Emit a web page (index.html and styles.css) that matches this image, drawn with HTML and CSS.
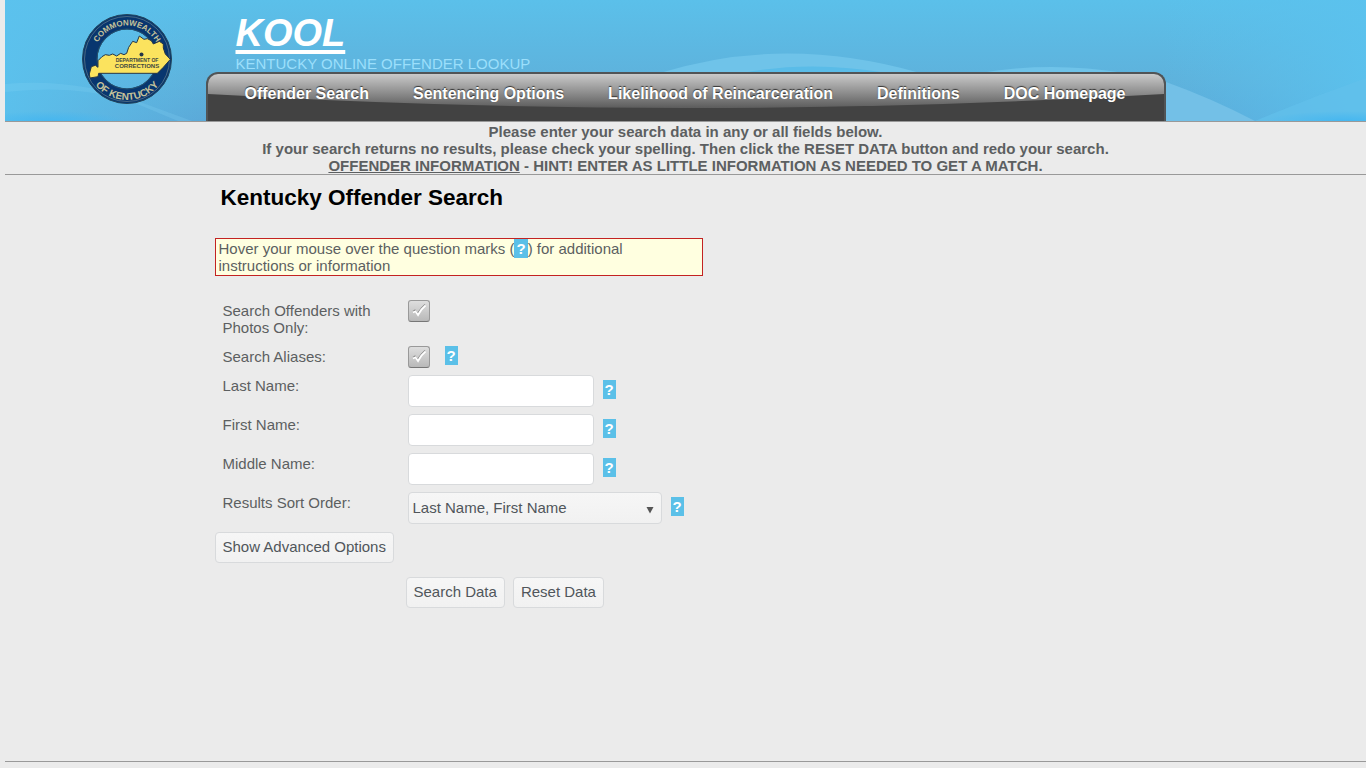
FILE: index.html
```html
<!DOCTYPE html>
<html lang="en">
<head>
<meta charset="utf-8">
<title>KOOL - Kentucky Online Offender Lookup</title>
<link rel="stylesheet" href="styles.css">
</head>
<body>
<header class="banner">
  <svg class="banner-art" viewBox="0 0 1361 121" preserveAspectRatio="none" aria-hidden="true">
    <defs>
      <linearGradient id="sky" x1="0" y1="0" x2="0" y2="1"><stop offset="0" stop-color="#5bc0ea"/><stop offset="0.65" stop-color="#5eb2dc"/><stop offset="1" stop-color="#5ba9d8"/></linearGradient>
      <linearGradient id="edge" x1="0" y1="0" x2="1" y2="0"><stop offset="0" stop-color="#5bc2ee" stop-opacity="0.9"/><stop offset="0.15" stop-color="#5bc2ee" stop-opacity="0"/><stop offset="0.85" stop-color="#5bc2ee" stop-opacity="0"/><stop offset="1" stop-color="#5bc2ee" stop-opacity="0.9"/></linearGradient>
      <radialGradient id="glow"><stop offset="0" stop-color="#43b6f0" stop-opacity="0.9"/><stop offset="1" stop-color="#43b6f0" stop-opacity="0"/></radialGradient>
    </defs>
    <rect width="1361" height="121" fill="url(#sky)"/>
    <rect width="1361" height="121" fill="url(#edge)"/>
    <ellipse cx="45" cy="121" rx="75" ry="10" fill="url(#glow)"/>
    <path d="M0 84Q70 78 135 102L187 121H173L125 101Q70 84 0 92Z" fill="#8ad4f5" opacity="0.22"/>
    <path d="M655 73Q780 34 915 73Z" fill="#6fc3e9"/>
    <path d="M738 73Q805 60 882 73Z" fill="#5abce8"/>
    <path d="M975 73Q1045 61 1120 73Z" fill="#6fc3e9"/>
    <path d="M1161 82Q1206 98 1250 121H1161Z" fill="#73c0e7"/>
    <path d="M1250 121Q1305 98 1361 78V121Z" fill="#62c1eb" opacity="0.7"/>
    <ellipse cx="1340" cy="121" rx="80" ry="10" fill="url(#glow)"/>
  </svg>
  <svg class="seal" viewBox="0 0 92 92" role="img" aria-label="Commonwealth of Kentucky Department of Corrections">
    <defs>
      <path id="arc-top" d="M12.500 46A33.500 33.500 0 0 1 79.500 46"/>
      <path id="arc-bottom" d="M5 46A41 41 0 0 0 87 46"/>
    </defs>
    <circle cx="46" cy="46" r="37" fill="none" stroke="#08366f" stroke-width="15"/>
    <circle cx="46" cy="46" r="44.500" fill="none" stroke="#24465b"/>
    <circle cx="46" cy="46" r="42.500" fill="none" stroke="#67808a" stroke-width="0.700"/>
    <circle cx="46" cy="46" r="30" fill="none" stroke="#28536c"/>
    <path transform="translate(-11 -9) scale(.3333)" d="M58 210L64 188L76 184L84 190V170L96 158L106 152L118 154L128 150L140 156L152 148L162 152L170 148L176 130L188 112L200 116L208 96L222 106L232 104L244 110L250 120L268 112L280 120V132L286 150L301 166L280 190L262 208H86L84 218L60 222Z" fill="#fbe35e" stroke="#253547" stroke-width="3"/>
    <circle cx="60.500" cy="41.500" r="2" fill="#253547"/>
    <text class="seal-ring" font-size="8"><textPath href="#arc-top" startOffset="50%" text-anchor="middle">COMMONWEALTH</textPath></text>
    <text class="seal-ring" font-size="10"><textPath href="#arc-bottom" startOffset="50%" text-anchor="middle">OF KENTUCKY</textPath></text>
    <text class="seal-name" x="56" y="49" font-size="5" text-anchor="middle">DEPARTMENT OF</text>
    <text class="seal-name" x="56" y="55" font-size="6" text-anchor="middle">CORRECTIONS</text>
  </svg>
  <div class="banner-inner">
    <h1 class="brand"><a href="#">KOOL</a></h1>
    <p class="tagline">KENTUCKY ONLINE OFFENDER LOOKUP</p>
    <nav class="menu">
      <svg class="menu-gloss" viewBox="0 0 956 47" preserveAspectRatio="none" aria-hidden="true">
        <defs><linearGradient id="gloss" x1="0" y1="0" x2="0" y2="1"><stop offset="0" stop-color="#cacaca"/><stop offset="1" stop-color="#5c5c5c"/></linearGradient></defs>
        <path d="M0 0H956V20Q478 48 0 20Z" fill="url(#gloss)"/>
      </svg>
      <a href="#">Offender Search</a>
      <a href="#">Sentencing Options</a>
      <a href="#">Likelihood of Reincarceration</a>
      <a href="#">Definitions</a>
      <a href="#">DOC Homepage</a>
    </nav>
  </div>
</header>
<hr class="rule">
<div class="notice">
  Please enter your search data in any or all fields below.<br>
  If your search returns no results, please check your spelling. Then click the RESET DATA button and redo your search.<br>
  <u>OFFENDER INFORMATION</u> - HINT! ENTER AS LITTLE INFORMATION AS NEEDED TO GET A MATCH.
</div>
<hr class="rule">
<main class="content">
  <h2 class="title">Kentucky Offender Search</h2>
  <p class="hint">Hover your mouse over the question marks (<span class="help">?</span>) for additional instructions or information</p>
  <form class="search">
    <div class="fields">
      <label for="photos">Search Offenders with Photos Only:</label>
      <div class="control check-control"><input class="check" type="checkbox" id="photos"></div>
      <label for="aliases">Search Aliases:</label>
      <div class="control check-control"><input class="check" type="checkbox" id="aliases"><span class="help">?</span></div>
      <label for="last">Last Name:</label>
      <div class="control"><input class="text" type="text" id="last"><span class="help">?</span></div>
      <label for="first">First Name:</label>
      <div class="control"><input class="text" type="text" id="first"><span class="help">?</span></div>
      <label for="middle">Middle Name:</label>
      <div class="control"><input class="text" type="text" id="middle"><span class="help">?</span></div>
      <label for="sort">Results Sort Order:</label>
      <div class="control"><select class="sort" id="sort"><option>Last Name, First Name</option></select><span class="help">?</span></div>
    </div>
    <button class="btn" type="button">Show Advanced Options</button>
    <div class="actions">
      <button class="btn" type="submit">Search Data</button>
      <button class="btn" type="reset">Reset Data</button>
    </div>
  </form>
</main>
<hr class="rule">
</body>
</html>
```
FILE: styles.css
```css
* { box-sizing: border-box; }

body {
  margin: 0;
  padding: 0 0 6px 5px;
  min-height: 100vh;
  display: flex;
  flex-direction: column;
  background: #ebebeb;
  color: #5c5f61;
  font: 15px/17px "Liberation Sans", Arial, sans-serif;
}

.banner { position: relative; background: #5cb8e4; }

.banner-art {
  position: absolute;
  inset: 0;
  width: 100%;
  height: 100%;
}

.seal {
  position: absolute;
  left: calc(50% - 605px);
  top: 13px;
  width: 92px;
  height: 92px;
}

.seal-ring { font-family: "Liberation Sans", Arial, sans-serif; font-weight: bold; fill: #c5c29a; }
.seal-name { font-family: "Liberation Sans", Arial, sans-serif; font-weight: bold; fill: #41483f; }

.banner-inner {
  position: relative;
  max-width: 960px;
  margin: 0 auto;
  padding-top: 11px;
}

.brand {
  margin: 0 30px;
  font-size: 38px;
  line-height: 44px;
  font-style: italic;
}

.brand a { color: #fff; text-decoration-thickness: 4px; text-underline-offset: 4px; text-decoration-skip-ink: none; }

.tagline { margin: 0 30px; color: #9bdffb; }

.menu {
  position: relative;
  display: flex;
  gap: 44px;
  height: 49px;
  padding: 11px 37px 0;
  border: 2px solid #515456;
  border-bottom: 0;
  border-radius: 12px 12px 0 0;
  background: #424242;
  overflow: hidden;
}

.menu-gloss {
  position: absolute;
  inset: 0;
  width: 100%;
  height: 100%;
}

.menu a {
  position: relative;
  color: #fff;
  font-size: 16px;
  font-weight: bold;
  line-height: 18px;
  text-decoration: none;
  text-shadow: 0 -1px 1px #333;
  white-space: nowrap;
}

.rule {
  width: 100%;
  height: 1px;
  margin: 0;
  border: 0;
  background: #999;
}

.notice {
  padding-top: 1px;
  text-align: center;
  font-weight: bold;
}

.content {
  flex: 1;
  width: 100%;
  max-width: 960px;
  margin: 0 auto;
  padding: 10px 9px 24px;
}

.title {
  margin: 0 6px;
  color: #000;
  font-size: 1.5em;
  line-height: 26px;
}

.hint {
  max-width: 488px;
  margin: 27px 0 24px;
  padding: 1px 60px 1px 3px;
  border: 1px solid #c32222;
  background: #ffffe0;
}

.help {
  padding: 1px 2px;
  background: #5bc0e8;
  color: #fff;
  font-weight: bold;
}

.fields {
  display: grid;
  grid-template-columns: 185px 1fr;
  gap: 7px 8px;
  margin-bottom: 8px;
}

.fields label { padding: 2px 7px 3px 8px; }

.control { display: flex; align-items: center; gap: 9px; padding-bottom: 0; }
.control .help { margin-bottom: 3px; }
.check-control { align-items: flex-start; gap: 15px; }

.text, .sort, .btn {
  margin: 0;
  border: 1px solid #d8dadc;
  border-radius: 4px;
  color: #50565b;
  font: inherit;
}

.text { width: 186px; height: 32px; padding: 0 6px; background: #fff; }

.sort {
  appearance: none;
  width: 254px;
  height: 32px;
  padding: 0 24px 1px 4px;
  background: url("data:image/svg+xml,%3Csvg xmlns='http://www.w3.org/2000/svg' width='8' height='7'%3E%3Cpath d='M.5 0h7L4 6.500z' fill='%23555'/%3E%3C/svg%3E") no-repeat right 7px top 14px, linear-gradient(#f6f6f6, #f1f1f1);
}

.btn {
  height: 31px;
  padding: 0 7px 2px;
  background: linear-gradient(#f6f6f6, #f1f1f1);
}

.check {
  appearance: none;
  width: 22px;
  height: 22px;
  margin: 0;
  border: 1px solid #999;
  border-bottom-color: #777;
  border-radius: 3px;
  background: url("data:image/svg+xml,%3Csvg xmlns='http://www.w3.org/2000/svg' width='20' height='20'%3E%3Cpath d='M4 10.500l2-1.500L8.500 12.500Q12 7 16 3.500' fill='none' stroke='%23888' stroke-width='1.200'/%3E%3Cpath d='M4 11.500l2.500-1.200L9 14Q12 8 16.500 4.500' fill='none' stroke='%23fff' stroke-width='1.800'/%3E%3C/svg%3E") no-repeat center, linear-gradient(#dedede, #b9b9b9);
}

.actions { display: flex; gap: 8px; margin: 14px 0 0 191px; }
```
